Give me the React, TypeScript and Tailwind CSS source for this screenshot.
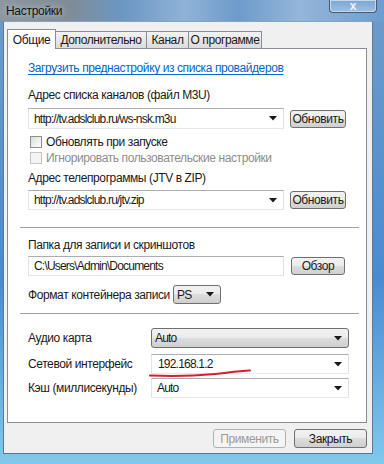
import React from "react";

const font = { fontFamily: '"Liberation Sans", Arial, sans-serif' };

const txt = "text-[12px] tracking-[-0.4px] text-[#1a1a1a] whitespace-nowrap";
const fieldTxt = "text-[12px] tracking-[-0.8px] leading-none text-[#1a1a1a] whitespace-nowrap";
const gray = "border-[#707070] bg-[linear-gradient(#f2f2f2_0%,#ebebeb_49%,#dddddd_50%,#cfcfcf_100%)]";
const field = "bg-white border border-[#abadb3] border-b-[#e3e9ef] border-l-[#e2e3ea] border-r-[#dbdfe6]";
const tab = "h-[17px] -ml-px border border-b-0 border-[#898c95] bg-[linear-gradient(#f2f2f2,#dcdcdc)] flex items-center justify-center whitespace-nowrap";

function Arrow() {
  return (
    <svg width="8" height="5" viewBox="0 0 8 5" className="shrink-0">
      <path d="M0 0h8L4 4.5z" fill="#1a1a1a" />
    </svg>
  );
}

function Combo({ value, w, className = "" }: { value: string; w: string; className?: string }) {
  return (
    <div className={`${w} h-[20px] flex items-center justify-between pl-[5px] pr-[6px] ${field} ${className}`}>
      <span className={fieldTxt}>{value}</span>
      <Arrow />
    </div>
  );
}

function Btn({ label, w, h = "h-[18px]", disabled = false }: { label: string; w: string; h?: string; disabled?: boolean }) {
  return (
    <div
      className={`${w} ${h} flex items-center justify-center rounded-[3px] border text-[12px] tracking-[-0.4px] leading-none whitespace-nowrap ${
        disabled ? "border-[#adb2b5] bg-[#f4f4f4] text-[#9a9a9a]" : `${gray} text-[#1a1a1a]`
      }`}
    >
      {label}
    </div>
  );
}

function Check({ label, disabled = false }: { label: string; disabled?: boolean }) {
  return (
    <div className="h-[15px] flex items-center gap-[4px]">
      <div
        className={`w-[12px] h-[12px] border ${
          disabled ? "border-[#c4c4c4] bg-[#f4f4f4]" : "border-[#8e8f8f] bg-[linear-gradient(135deg,#dcdcdc,#ffffff)]"
        }`}
      />
      <span className={`text-[12px] tracking-[-0.4px] leading-none whitespace-nowrap ${disabled ? "text-[#8d8d8d]" : "text-[#1a1a1a]"}`}>
        {label}
      </span>
    </div>
  );
}

function Label({ children, className = "" }: { children: React.ReactNode; className?: string }) {
  return <div className={`h-[16px] flex items-center ${txt} ${className}`}>{children}</div>;
}

export default function App() {
  return (
    <div
      style={font}
      className="w-[384px] h-[464px] flex flex-col overflow-hidden bg-[linear-gradient(180deg,#6f9cc8_0%,#4a8bd0_60%,#7fc9ec_100%)]"
    >
      {/* title bar */}
      <div className="h-[21px] flex justify-between bg-[linear-gradient(90deg,#8d969d_0%,#808c97_18%,#6b97c4_32%,#8fb3d8_48%,#6d9bcc_62%,#94b6d9_78%,#6c9dd0_100%)]">
        <div className="pl-[6px] flex items-center text-[12px] tracking-[-0.3px] text-[#111] [text-shadow:0_0_6px_#d8dde2]">Настройки</div>
        <div className="mr-[7px] w-[48px] h-[13px] rounded-b-[4px] border border-t-0 border-[#4a5a70] bg-[linear-gradient(#7aa6d2,#9dc0e2)] shadow-[inset_0_0_0_1px_#c4d8ec] flex items-end justify-center overflow-hidden">
          <span className="text-[12px] leading-[11px] font-bold text-[#eef3f8]">x</span>
        </div>
      </div>

      <div className="flex-1 flex pl-[3px] pr-[11px] pb-[10px]">
        {/* client */}
        <div className="flex-1 flex flex-col bg-[#f0f0f0] border border-[#5b7a9a] border-t-[#8aa2bb] pl-[3px] pr-[5px]">
          {/* tabs */}
          <div className="h-[26px] flex items-end text-[12px] tracking-[-0.4px] text-[#1a1a1a]">
            <div className="relative z-10 -mb-px w-[49px] h-[20px] bg-white border border-b-0 border-[#898c95] flex items-center justify-center">
              Общие
            </div>
            <div className={`w-[92px] ${tab}`}>Дополнительно</div>
            <div className={`w-[43px] ${tab}`}>Канал</div>
            <div className={`w-[74px] ${tab}`}>О программе</div>
          </div>

          {/* panel */}
          <div className="h-[375px] bg-white border border-[#898c95] flex flex-col pl-[20px]">
            <div className="mt-[11px] h-[16px] flex items-center text-[12px] tracking-[-0.4px] text-[#0066cc] underline underline-offset-2 whitespace-nowrap">
              Загрузить преднастройку из списка провайдеров
            </div>

            <Label className="mt-[11px]">Адрес списка каналов (файл M3U)</Label>
            <div className="mt-[5px] h-[21px] flex items-center gap-[6px]">
              <Combo value="http://tv.adslclub.ru/ws-nsk.m3u" w="w-[256px]" className="h-[21px]" />
              <Btn label="Обновить" w="w-[56px]" />
            </div>

            <div className="mt-[5px] pl-[2px]">
              <Check label="Обновлять при запуске" />
            </div>
            <div className="mt-[1px] pl-[2px]">
              <Check label="Игнорировать пользовательские настройки" disabled />
            </div>

            <Label className="mt-[5px]">Адрес телепрограммы (JTV в ZIP)</Label>
            <div className="mt-[4px] h-[20px] flex items-center gap-[6px]">
              <Combo value="http://tv.adslclub.ru/jtv.zip" w="w-[256px]" />
              <Btn label="Обновить" w="w-[56px]" />
            </div>

            <div className="mt-[17px] -ml-[8px] w-[339px] h-px bg-[#a0a0a0]" />

            <Label className="mt-[9px]">Папка для записи и скриншотов</Label>
            <div className="mt-[3px] h-[20px] flex items-center gap-[7px]">
              <div className={`w-[256px] h-[20px] flex items-center pl-[5px] ${field}`}>
                <span className={fieldTxt}>C:\Users\Admin\Documents</span>
              </div>
              <Btn label="Обзор" w="w-[54px]" />
            </div>

            <div className="mt-[9px] h-[19px] flex items-center">
              <span className={`w-[145px] ${txt}`}>Формат контейнера записи</span>
              <div className={`w-[48px] h-[19px] flex items-center justify-between pl-[3px] pr-[6px] rounded-[3px] border ${gray}`}>
                <span className={fieldTxt}>PS</span>
                <Arrow />
              </div>
            </div>

            <div className="mt-[9px] -ml-[8px] w-[339px] h-px bg-[#a0a0a0]" />

            <div className="mt-[14px] h-[20px] flex items-center">
              <span className={`w-[123px] ${txt}`}>Аудио карта</span>
              <div className={`w-[198px] h-[20px] flex items-center justify-between pl-[3px] pr-[6px] rounded-[3px] border ${gray}`}>
                <span className={fieldTxt}>Auto</span>
                <Arrow />
              </div>
            </div>

            <div className="mt-[6px] h-[20px] flex items-center">
              <span className={`w-[123px] ${txt}`}>Сетевой интерфейс</span>
              <div className="relative">
                <Combo value="192.168.1.2" w="w-[198px]" className="pl-[6px]" />
                <svg width="104" height="10" viewBox="0 0 104 10" className="absolute left-[-2px] top-[14px]">
                  <path d="M1 7.5 C 25 8.5, 50 7.5, 66 6 C 80 4.5, 90 3, 101 2.5" fill="none" stroke="#d3202c" strokeWidth="2" strokeLinecap="round" />
                </svg>
              </div>
            </div>

            <div className="mt-[4px] h-[20px] flex items-center">
              <span className={`w-[123px] ${txt}`}>Кэш (миллисекунды)</span>
              <Combo value="Auto" w="w-[198px]" />
            </div>
          </div>

          {/* bottom buttons */}
          <div className="mt-[6px] flex justify-end gap-[8px]">
            <Btn label="Применить" w="w-[73px]" h="h-[19px]" disabled />
            <Btn label="Закрыть" w="w-[73px]" h="h-[19px]" />
          </div>
        </div>
      </div>
    </div>
  );
}
